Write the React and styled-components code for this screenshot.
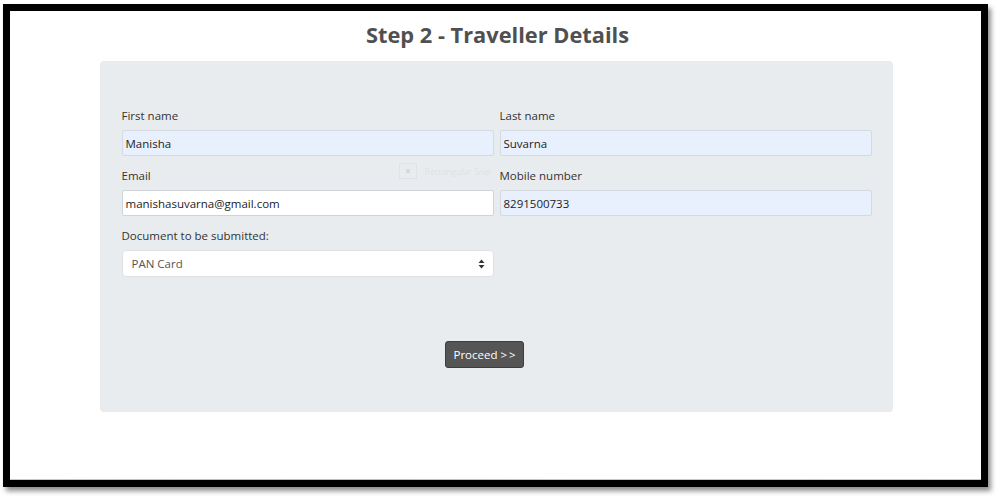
import React from "react";
import styled, { createGlobalStyle } from "styled-components";

const GlobalStyle = createGlobalStyle`
  html, body {
    margin: 0;
    padding: 0;
    background: #ffffff;
  }
  body {
    font-family: "Open Sans", "Noto Sans", Arial, sans-serif;
  }
`;

const Page = styled.div`
  width: 1000px;
  height: 500px;
  padding: 4px 0 0 3px;
  box-sizing: border-box;
  background: #fff;
`;

const Frame = styled.div`
  width: 985px;
  height: 483px;
  box-sizing: border-box;
  border: 7px solid #000;
  box-shadow: 3px 4px 5px rgba(0, 0, 0, 0.45);
  background: #fff;
  display: flex;
  flex-direction: column;
  align-items: center;
  position: relative;
`;

const Title = styled.h2`
  margin: 9px 0 0 0;
  font-size: 21.8px;
  line-height: 30px;
  font-weight: 700;
  color: #505050;
  padding-left: 4px;
`;

const Panel = styled.div`
  margin-top: 11px;
  width: 793px;
  height: 351px;
  box-sizing: border-box;
  background: #e9ecef;
  border-radius: 4px;
  padding: 46px 21px 0 22px;
  position: relative;
  margin-left: 1px;
`;

const Grid = styled.div`
  display: grid;
  grid-template-columns: 372px 372px;
  column-gap: 6px;
`;

const Field = styled.div`
  display: flex;
  flex-direction: column;
  margin-bottom: 11px;
`;

const Label = styled.label`
  font-size: 11.5px;
  line-height: 18px;
  color: #333;
  margin-bottom: 5px;
`;

const Input = styled.div`
  height: 26px;
  box-sizing: border-box;
  border: 1px solid ${(p) => (p.$filled ? "#d3dae2" : "#ced4da")};
  border-radius: 2px;
  background: ${(p) => (p.$filled ? "#e8f0fe" : "#ffffff")};
  font-size: 11.5px;
  color: #222;
  padding: 0 3px;
  display: flex;
  align-items: center;
`;

const Select = styled.div`
  height: 27px;
  box-sizing: border-box;
  border: 1px solid #dde1e5;
  border-radius: 4px;
  background: #fff;
  font-size: 11.5px;
  color: #555;
  padding: 0 8px 0 9px;
  display: flex;
  align-items: center;
  justify-content: space-between;
`;

const Arrows = styled.svg`
  width: 7px;
  height: 10px;
`;

const ButtonRow = styled.div`
  display: flex;
  justify-content: center;
  padding-right: 24px;
  margin-top: 53px;
`;

const Button = styled.button`
  width: 79px;
  height: 27px;
  box-sizing: border-box;
  background: #555555;
  border: 1px solid #3d3d3d;
  border-radius: 3px;
  color: #fff;
  font-family: "Open Sans", "Noto Sans", Arial, sans-serif;
  font-size: 11.5px;
  padding: 0;
`;

const Ghost = styled.div`
  position: absolute;
  left: 299px;
  top: 102px;
  display: flex;
  align-items: center;
  gap: 8px;
  font-size: 8.5px;
  color: #dfe2e5;
  z-index: 1;
`;

const GhostBox = styled.span`
  width: 16px;
  height: 14px;
  border: 1px solid #e1e4e7;
  display: flex;
  align-items: center;
  justify-content: center;
  &::after {
    content: "";
    width: 4px;
    height: 4px;
    background: #d6d9dc;
  }
`;

const BaseLine = styled.div`
  position: absolute;
  left: 0;
  right: 0;
  bottom: 0;
  height: 1px;
  background: linear-gradient(90deg, #b9a07a, #8a8f96 30%, #9aa3a8 60%, #b9a07a);
  opacity: 0.6;
`;

export default function App() {
  return (
    <>
      <GlobalStyle />
      <Page>
        <Frame>
          <Title>Step 2 - Traveller Details</Title>
          <Panel>
            <Ghost>
              <GhostBox />
              Rectangular Snip
            </Ghost>
            <Grid>
              <Field>
                <Label>First name</Label>
                <Input $filled>Manisha</Input>
              </Field>
              <Field>
                <Label>Last name</Label>
                <Input $filled>Suvarna</Input>
              </Field>
              <Field>
                <Label>Email</Label>
                <Input>manishasuvarna@gmail.com</Input>
              </Field>
              <Field>
                <Label>Mobile number</Label>
                <Input $filled>8291500733</Input>
              </Field>
              <Field>
                <Label>Document to be submitted:</Label>
                <Select>
                  PAN Card
                  <Arrows viewBox="0 0 7 10">
                    <path d="M3.5 0.5 L6.5 4 H0.5 Z" fill="#333" />
                    <path d="M3.5 9.5 L6.5 6 H0.5 Z" fill="#333" />
                  </Arrows>
                </Select>
              </Field>
            </Grid>
            <ButtonRow>
              <Button>Proceed &gt;&thinsp;&gt;</Button>
            </ButtonRow>
          </Panel>
          <BaseLine />
        </Frame>
      </Page>
    </>
  );
}
